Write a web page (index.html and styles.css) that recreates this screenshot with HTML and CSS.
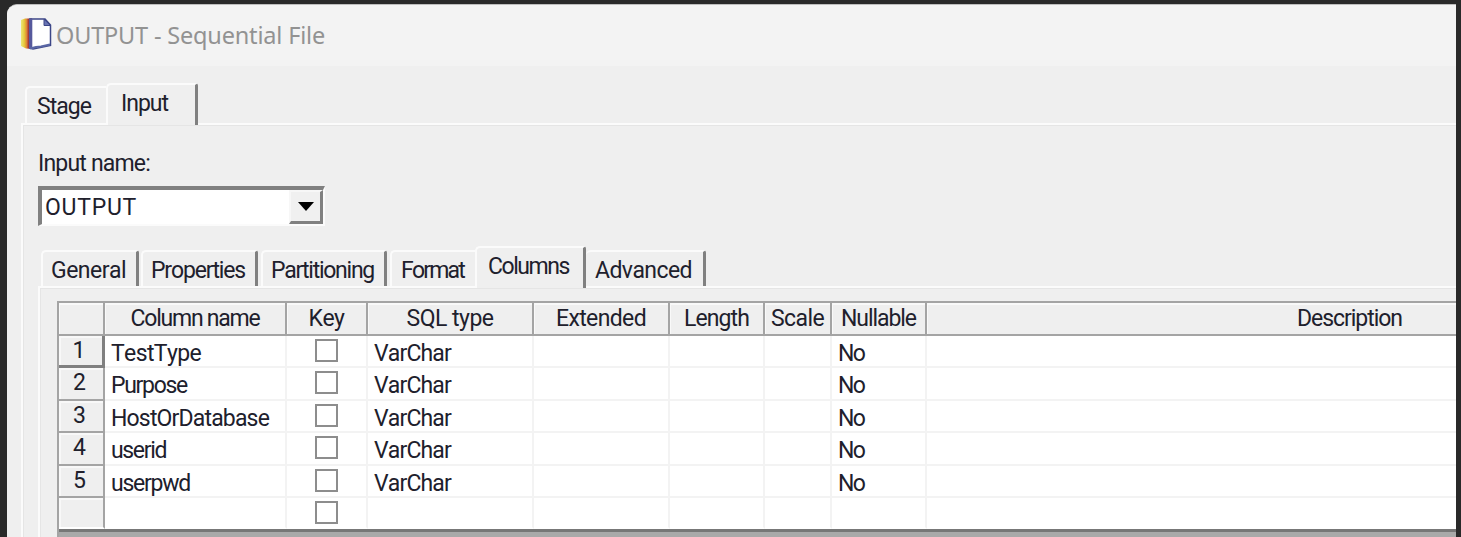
FILE: index.html
```html
<!DOCTYPE html>
<html lang="en">
<head>
<meta charset="utf-8">
<title>OUTPUT - Sequential File</title>
<link rel="stylesheet" href="styles.css">
</head>
<body>
<div class="window">
  <header class="titlebar">
    <svg class="app-icon" width="31" height="32" viewBox="0 0 31 32">
      <defs>
        <linearGradient id="spine"><stop offset="0" stop-color="#ece878"/><stop offset=".3" stop-color="#e5c83c"/><stop offset=".5" stop-color="#e08a35"/><stop offset=".68" stop-color="#a53a38"/><stop offset="1" stop-color="#43366f"/></linearGradient>
      </defs>
      <path d="M0 2L4 .5H11V31L5 30.5L0 28Z" fill="url(#spine)"/>
      <path d="M9 1H24L29.5 7V27.5L12 31L9 30Z" fill="#fff" stroke="#3c4687" stroke-width="1.5"/>
      <path d="M8 .8H11.3V31H8Z" fill="#56599c"/>
      <path d="M23 1.2V7.5H29.5Z" fill="#6974b4" stroke="#3c4687"/>
      <path d="M9 30.5L15 29L20 28.5L29 26.5" fill="none" stroke="#5966a5" stroke-width="2"/>
    </svg>
    <h1 class="title" data-w="269">OUTPUT - Sequential File</h1>
  </header>
  <nav class="tabs tabs-outer">
    <div class="tab tab-stage"><span data-w="54">Stage</span></div>
    <div class="tab tab-input edge"><span data-w="47">Input</span></div>
  </nav>
  <main class="page">
    <label class="name-label"><span data-w="112">Input name:</span></label>
    <div class="combo">
      <span class="combo-value" data-w="92">OUTPUT</span>
      <span class="combo-button"><svg width="16" height="9" viewBox="0 0 16 9"><path d="M0 0H16L8 9Z" fill="#000"/></svg></span>
    </div>
    <nav class="tabs tabs-inner">
      <div class="tab t-general edge"><span data-w="75">General</span></div>
      <div class="tab t-properties edge"><span data-w="94">Properties</span></div>
      <div class="tab t-partitioning edge"><span data-w="103">Partitioning</span></div>
      <div class="tab t-format"><span data-w="63">Format</span></div>
      <div class="tab t-columns edge"><span data-w="81">Columns</span></div>
      <div class="tab t-advanced edge"><span data-w="97">Advanced</span></div>
    </nav>
    <section class="panel">
      <div class="table">
        <div class="row head">
          <div class="cell"></div>
          <div class="cell"><span data-w="129">Column name</span></div>
          <div class="cell"><span data-w="36">Key</span></div>
          <div class="cell"><span data-w="87">SQL type</span></div>
          <div class="cell"><span data-w="90">Extended</span></div>
          <div class="cell"><span data-w="65">Length</span></div>
          <div class="cell"><span data-w="53">Scale</span></div>
          <div class="cell"><span data-w="75">Nullable</span></div>
          <div class="cell desc"><span data-w="105">Description</span></div>
        </div>
        <div class="row">
          <div class="cell num current"><span>1</span></div><div class="cell"><span data-w="90">TestType</span></div><div class="cell key"><i class="check"></i></div><div class="cell"><span data-w="77">VarChar</span></div><div class="cell"></div><div class="cell"></div><div class="cell"></div><div class="cell"><span data-w="26">No</span></div><div class="cell"></div>
        </div>
        <div class="row">
          <div class="cell num"><span>2</span></div><div class="cell"><span data-w="76">Purpose</span></div><div class="cell key"><i class="check"></i></div><div class="cell"><span data-w="77">VarChar</span></div><div class="cell"></div><div class="cell"></div><div class="cell"></div><div class="cell"><span data-w="26">No</span></div><div class="cell"></div>
        </div>
        <div class="row">
          <div class="cell num"><span>3</span></div><div class="cell"><span data-w="158">HostOrDatabase</span></div><div class="cell key"><i class="check"></i></div><div class="cell"><span data-w="77">VarChar</span></div><div class="cell"></div><div class="cell"></div><div class="cell"></div><div class="cell"><span data-w="26">No</span></div><div class="cell"></div>
        </div>
        <div class="row">
          <div class="cell num"><span>4</span></div><div class="cell"><span data-w="55">userid</span></div><div class="cell key"><i class="check"></i></div><div class="cell"><span data-w="77">VarChar</span></div><div class="cell"></div><div class="cell"></div><div class="cell"></div><div class="cell"><span data-w="26">No</span></div><div class="cell"></div>
        </div>
        <div class="row">
          <div class="cell num"><span>5</span></div><div class="cell"><span data-w="79">userpwd</span></div><div class="cell key"><i class="check"></i></div><div class="cell"><span data-w="77">VarChar</span></div><div class="cell"></div><div class="cell"></div><div class="cell"></div><div class="cell"><span data-w="26">No</span></div><div class="cell"></div>
        </div>
        <div class="row last">
          <div class="cell num"></div><div class="cell"></div><div class="cell key"><i class="check"></i></div><div class="cell"></div><div class="cell"></div><div class="cell"></div><div class="cell"></div><div class="cell"></div><div class="cell"></div>
        </div>
      </div>
    </section>
  </main>
</div>
<script src="script.js"></script>
</body>
</html>
```
FILE: styles.css
```css
* { box-sizing: border-box; }
body { margin: 0; height: 537px; overflow: hidden; background: #292929; color: #20202c; font: 23px/28px Roboto, "Liberation Sans", sans-serif; font-kerning: none; }
span[data-w], .title { display: inline-block; white-space: nowrap; }
.window { margin: 4px 5px 0 7px; height: 533px; display: flex; flex-direction: column; background: #efefef; border-top: 1px solid #bdbdbd; border-radius: 10px 0 0 0; overflow: hidden; }
.titlebar { height: 61px; flex: none; display: flex; align-items: flex-start; gap: 4px; padding: 12px 0 0 14px; background: #f3f3f3; }
.app-icon { flex: none; filter: blur(.5px); margin-top: 1px; }
.title { margin: 3px 0 0; font: 400 23.5px/30px "Noto Sans", "Open Sans", sans-serif; color: #929292; }
.tabs { display: flex; align-items: flex-end; flex: none; }
.tab { border-top: 2px solid #fbfbfb; border-left: 2px solid #fbfbfb; border-radius: 5px 0 0 0; background: #efefef; }
.edge { border-right: 3px solid #808080; border-top-right-radius: 3px; }
.tabs-outer { height: 57px; padding-left: 18px; }
.tab-stage { width: 81px; height: 37px; padding: 5px 0 0 10px; }
.tab-input { width: 92px; height: 42px; margin-bottom: -2px; padding: 5px 0 0 13px; z-index: 1; }
.page { flex: 1; margin-left: 14px; border-top: 2px solid #fbfbfb; border-left: 2px solid #fbfbfb; box-shadow: inset 1px 1px #e5e5e5; display: flex; flex-direction: column; padding-left: 15px; }
.name-label { margin-top: 25px; height: 36px; }
.combo { width: 287px; height: 40px; display: flex; border: 4px solid #808080; border-right: 2px solid #fbfbfb; border-bottom: 2px solid #fbfbfb; background: #fff; }
.combo-value { flex: 1; padding: 4px 0 0 3px; }
.combo-button { width: 34px; height: 34px; display: flex; align-items: center; justify-content: center; padding-left: 1px; background: #f0f0f0; border-left: 2px solid #f7f7f7; border-top: 2px solid #f7f7f7; border-right: 3px solid #808080; border-bottom: 3px solid #808080; }
.tabs-inner { height: 60px; padding-left: 3px; }
.tabs-inner .tab { height: 36px; padding-top: 5px; }
.t-general { width: 98px; margin-right: 2px; padding-left: 8px; }
.t-properties { width: 117px; margin-right: 3px; padding-left: 8px; }
.t-partitioning { width: 126px; margin-right: 3px; padding-left: 8px; }
.t-format { width: 86px; padding-left: 9px; }
.tabs-inner .t-columns { width: 111px; height: 42px; margin: 0 0 -2px -1px; padding-left: 11px; z-index: 1; }
.tabs-inner .t-advanced { width: 120px; border-left: 0; padding-left: 9px; }
.panel { flex: 1; border-top: 2px solid #fbfbfb; border-left: 2px solid #fbfbfb; box-shadow: inset 1px 1px #e5e5e5; padding: 13px 0 0 17px; }
.table { border-top: 2px solid #a4a4a4; border-left: 2px solid #a4a4a4; background: #a9a9a9; height: 242px; }
.row { display: grid; grid-template-columns: 46px 182px 81px 166px 136px 95px 67px 95px 1fr; height: 32.4px; }
.cell { background: #fff; border-right: 2px solid #f3f3f3; border-bottom: 2px solid #f3f3f3; padding: 4px 0 0 6px; overflow: hidden; }
.head { height: 33px; }
.head .cell { display: flex; justify-content: center; padding: 2px 0 0; background: #efefef; border-right-color: #a4a4a4; border-bottom-color: #a4a4a4; box-shadow: inset 1px 2px #f9f9f9; }
.head .desc { border-right: 0; justify-content: flex-start; padding-left: 370px; }
.cell:last-child { border-right: 0; }
.cell.num { background: #efefef; border-color: #a4a4a4; box-shadow: inset 2px 2px #f8f8f8; text-align: center; padding: 1px 3px 0 0; }
.cell.current { border-right: 3px solid #808080; border-bottom: 3px solid #808080; }
.cell.key { display: flex; justify-content: center; padding: 3px 0 0; }
.check { width: 23px; height: 23px; border: 2px solid #8d8d8d; background: #fff; }
.last .cell { border-bottom-color: #fff; }
.last { height: 34px; border-bottom: 3px solid #777; }
```
FILE: script.js
```js
document.querySelectorAll('[data-w]').forEach(function (el) {
  var range = document.createRange();
  range.selectNodeContents(el);
  var natural = range.getBoundingClientRect().width;
  el.style.letterSpacing = ((el.dataset.w - natural) / (el.textContent.length)) + 'px';
});
```
